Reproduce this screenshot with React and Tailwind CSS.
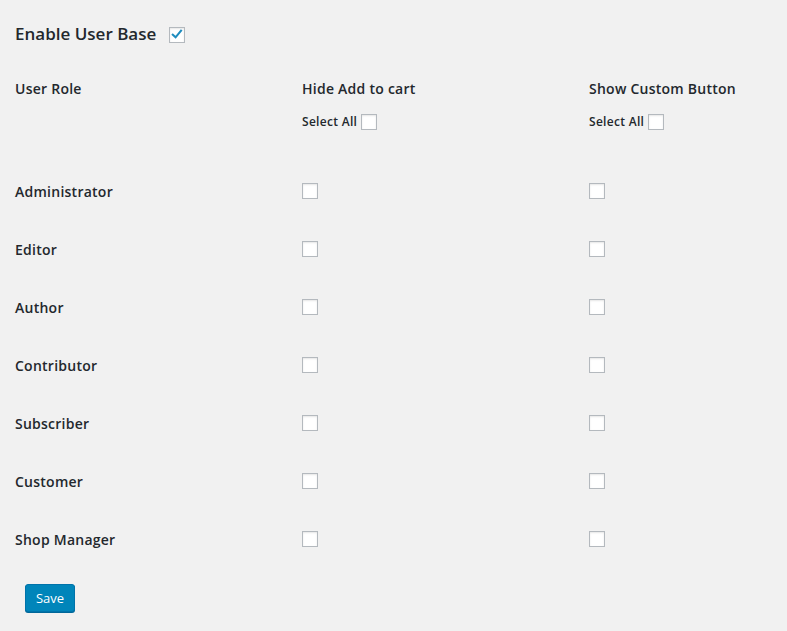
const roles = [
  "Administrator",
  "Editor",
  "Author",
  "Contributor",
  "Subscriber",
  "Customer",
  "Shop Manager",
];

function Box({ checked }) {
  return (
    <span className="inline-flex h-4 w-4 items-center justify-center border border-[#b4b9be] bg-white shadow-[inset_0_1px_2px_rgba(0,0,0,0.1)]">
      {checked && (
        <svg viewBox="0 0 16 16" className="h-[15px] w-[15px]">
          <path d="M3.2 8.2 L6.4 11.2 L12.6 3.6" fill="none" stroke="#1e8cbe" strokeWidth="2.4" strokeLinecap="square" />
        </svg>
      )}
    </span>
  );
}

export default function App() {
  return (
    <div className="min-h-[631px] w-full bg-[#f1f1f1] pl-[15px] pt-[22px] text-[#23282d] font-['Open_Sans',sans-serif]">
      {/* title */}
      <div className="flex h-6 items-center">
        <span className="text-[17px] font-semibold leading-6">Enable User Base</span>
        <span className="ml-[13px] mt-[1px] flex">
          <Box checked />
        </span>
      </div>

      {/* header */}
      <div className="mt-[33px] grid grid-cols-[287px_287px_1fr] text-sm font-semibold leading-5 tracking-[0.25px]">
        <div>User Role</div>
        <div>
          <div>Hide Add to cart</div>
          <div className="mt-[15px] flex h-4 items-center text-xs tracking-[0.3px]">
            <span className="mr-1">Select All</span>
            <Box />
          </div>
        </div>
        <div>
          <div>Show Custom Button</div>
          <div className="mt-[15px] flex h-4 items-center text-xs tracking-[0.3px]">
            <span className="mr-1">Select All</span>
            <Box />
          </div>
        </div>
      </div>

      {/* rows */}
      <div className="mt-[32px]">
        {roles.map((r) => (
          <div key={r} className="grid h-[58px] grid-cols-[287px_287px_1fr] items-center text-sm font-semibold tracking-[0.25px]">
            <div className="mt-[2px]">{r}</div>
            <div className="flex"><Box /></div>
            <div className="flex"><Box /></div>
          </div>
        ))}
      </div>

      <div className="mt-4 pb-[19px] pl-[10px]">
        <button className="h-7 w-[50px] rounded-[3px] border border-[#0073aa] bg-[#0085ba] text-[13px] leading-[26px] text-white shadow-[0_1px_0_#006799]">
          Save
        </button>
      </div>
    </div>
  );
}
